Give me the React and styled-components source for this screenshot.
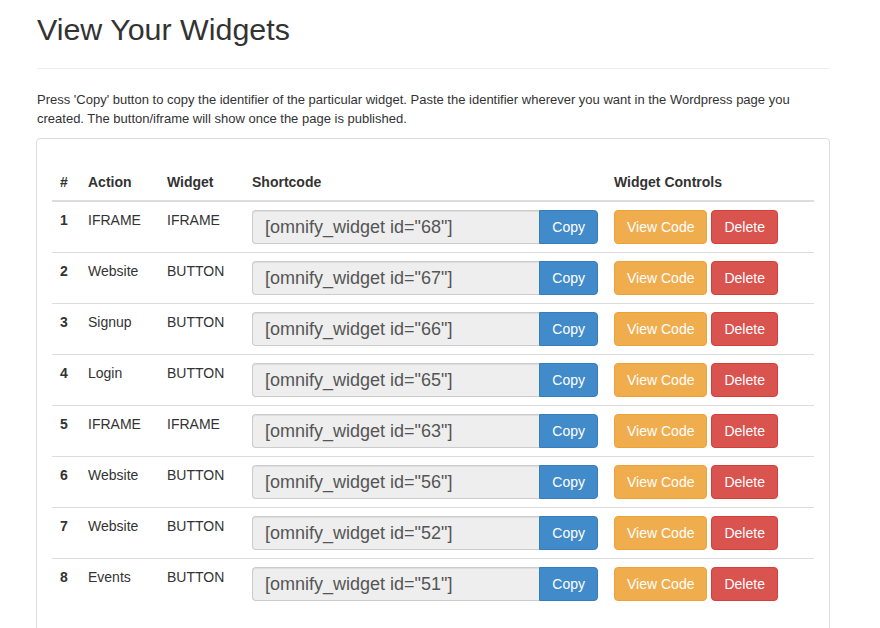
import React from "react";
import styled, { createGlobalStyle } from "styled-components";

const GlobalStyle = createGlobalStyle`
  html, body {
    margin: 0;
    padding: 0;
    background: #fff;
  }
  body {
    font-family: "Liberation Sans", Helvetica, Arial, sans-serif;
    font-size: 14px;
    line-height: 1.42857;
    color: #333;
  }
  * {
    box-sizing: border-box;
  }
`;

const Page = styled.div`
  width: 794px;
  margin-left: 36px;
  padding-top: 13px;
`;

const Title = styled.h2`
  margin: 0 0 0 1px;
  font-size: 30.4px;
  font-weight: 500;
  line-height: 1.1;
  color: #333;
`;

const Rule = styled.hr`
  margin: 22px 0 21px 1px;
  border: 0;
  border-top: 1px solid #eee;
`;

const Intro = styled.p`
  margin: 0 0 10px 1px;
  font-size: 13px;
  line-height: 19px;
`;

const Panel = styled.div`
  border: 1px solid #ddd;
  border-radius: 4px;
  padding: 25px 15px 30px;
  min-height: 520px;
`;

const Table = styled.table`
  width: 100%;
  border-collapse: collapse;
  border-spacing: 0;
  table-layout: fixed;
`;

const Head = styled.th`
  width: ${(p) => p.$w}px;
  padding: 8px;
  text-align: left;
  font-weight: bold;
  line-height: 20px;
  vertical-align: bottom;
  border-bottom: 2px solid #ddd;
`;

const Row = styled.tr`
  & + & > td {
    border-top: 1px solid #ddd;
  }
`;

const Cell = styled.td`
  padding: 8px;
  line-height: 20px;
  vertical-align: top;
  font-weight: ${(p) => (p.$bold ? "bold" : "normal")};
`;

const InputGroup = styled.div`
  display: flex;
  width: 346px;
`;

const Code = styled.input`
  flex: 1;
  min-width: 0;
  height: 34px;
  padding: 0 12px;
  font-family: "Liberation Sans", Helvetica, Arial, sans-serif;
  font-size: 18px;
  color: #555;
  background: #eee;
  border: 1px solid #ccc;
  border-right: 0;
  border-radius: 4px 0 0 4px;
  box-shadow: inset 0 1px 1px rgba(0, 0, 0, 0.075);
  outline: none;
`;

const colors = {
  primary: ["#428bca", "#357ebd"],
  warning: ["#f0ad4e", "#eea236"],
  danger: ["#d9534f", "#d43f3a"],
};

const Button = styled.button`
  height: 34px;
  padding: 6px 12px;
  font-family: "Liberation Sans", Helvetica, Arial, sans-serif;
  font-size: 14px;
  line-height: 20px;
  color: #fff;
  background: ${(p) => colors[p.$kind][0]};
  border: 1px solid ${(p) => colors[p.$kind][1]};
  border-radius: ${(p) => (p.$attached ? "0 4px 4px 0" : "4px")};
  cursor: pointer;
`;

const Controls = styled.div`
  display: flex;
  gap: 4px;
`;

const widgets = [
  { action: "IFRAME", type: "IFRAME", id: 68 },
  { action: "Website", type: "BUTTON", id: 67 },
  { action: "Signup", type: "BUTTON", id: 66 },
  { action: "Login", type: "BUTTON", id: 65 },
  { action: "IFRAME", type: "IFRAME", id: 63 },
  { action: "Website", type: "BUTTON", id: 56 },
  { action: "Website", type: "BUTTON", id: 52 },
  { action: "Events", type: "BUTTON", id: 51 },
];

function App() {
  return (
    <>
      <GlobalStyle />
      <Page>
        <Title>View Your Widgets</Title>
        <Rule />
        <Intro>
          Press 'Copy' button to copy the identifier of the particular widget.
          Paste the identifier wherever you want in the Wordpress page you
          created. The button/iframe will show once the page is published.
        </Intro>
        <Panel>
          <Table>
            <thead>
              <tr>
                <Head $w={28}>#</Head>
                <Head $w={79}>Action</Head>
                <Head $w={85}>Widget</Head>
                <Head $w={362}>Shortcode</Head>
                <Head>Widget Controls</Head>
              </tr>
            </thead>
            <tbody>
              {widgets.map((w, i) => (
                <Row key={w.id}>
                  <Cell $bold>{i + 1}</Cell>
                  <Cell>{w.action}</Cell>
                  <Cell>{w.type}</Cell>
                  <Cell>
                    <InputGroup>
                      <Code readOnly value={`[omnify_widget id="${w.id}"]`} />
                      <Button $kind="primary" $attached>
                        Copy
                      </Button>
                    </InputGroup>
                  </Cell>
                  <Cell>
                    <Controls>
                      <Button $kind="warning">View Code</Button>
                      <Button $kind="danger">Delete</Button>
                    </Controls>
                  </Cell>
                </Row>
              ))}
            </tbody>
          </Table>
        </Panel>
      </Page>
    </>
  );
}

export default App;
